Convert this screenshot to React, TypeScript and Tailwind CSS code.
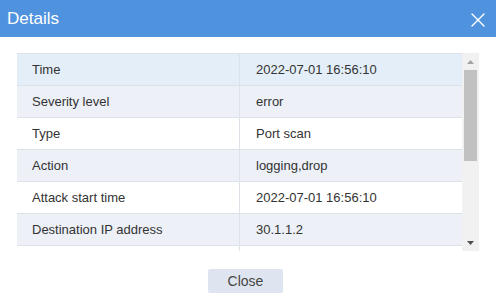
import { X } from "lucide-react";

const rows: [string, string][] = [
  ["Time", "2022-07-01 16:56:10"],
  ["Severity level", "error"],
  ["Type", "Port scan"],
  ["Action", "logging,drop"],
  ["Attack start time", "2022-07-01 16:56:10"],
  ["Destination IP address", "30.1.1.2"],
  ["", ""],
];

function rowBg(i: number) {
  if (i === 0) return "bg-[#e3eef8]";
  return i % 2 === 1 ? "bg-[#edf0f7]" : "bg-white";
}

export default function App() {
  return (
    <div className="w-[496px] h-[295px] bg-white flex flex-col font-['Liberation_Sans',Arial,sans-serif] text-[#333]">
      <div className="h-[37px] bg-[#4f93df] flex items-center justify-between pl-[7px] pr-[6px]">
        <span className="text-white text-[17px] leading-none">Details</span>
        <X className="text-white w-[24px] h-[24px] mt-[3px]" strokeWidth={1.4} />
      </div>

      <div className="flex px-[17px] pt-[16px]">
        {/* table body, clipped like a scroll area */}
        <div className="w-[445px] h-[198px] overflow-hidden border-t border-[#dde2e8]">
          {rows.map(([k, v], i) => (
            <div key={i} className={`flex h-[32px] border-b border-[#dde2e8] text-[13px] ${rowBg(i)}`}>
              <div className="w-[223px] border-r border-[#dde2e8] flex items-center pl-[15px]">{k}</div>
              <div className="flex-1 flex items-center pl-[16px]">{v}</div>
            </div>
          ))}
        </div>

        {/* scrollbar */}
        <div className="w-[17px] h-[198px] bg-[#f1f1f1] flex flex-col items-center">
          <div className="h-[17px] flex items-center justify-center">
            <svg width="7" height="4" viewBox="0 0 7 4">
              <path d="M0 4 L3.5 0 L7 4 Z" fill="#a3a3a3" />
            </svg>
          </div>
          <div className="w-[13px] h-[91px] bg-[#c1c1c1]" />
          <div className="flex-1" />
          <div className="h-[17px] flex items-center justify-center">
            <svg width="7" height="4" viewBox="0 0 7 4">
              <path d="M0 0 L7 0 L3.5 4 Z" fill="#505050" />
            </svg>
          </div>
        </div>
      </div>

      <div className="flex justify-center pt-[18px] pr-[5px]">
        <button className="w-[75px] h-[24px] bg-[#dfe5f0] rounded-[2px] text-[14px] text-[#444] leading-none">
          Close
        </button>
      </div>
    </div>
  );
}
